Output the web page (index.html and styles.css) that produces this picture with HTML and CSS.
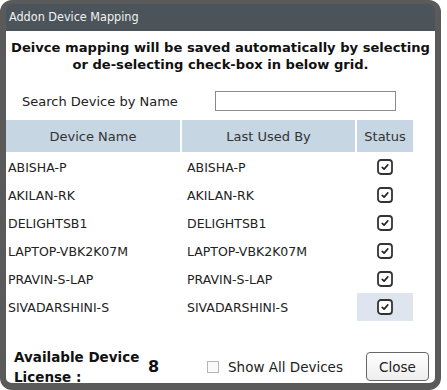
FILE: index.html
```html
<!DOCTYPE html>
<html lang="en">
<head>
    <meta charset="UTF-8">
    <title>Addon Device Mapping</title>
    <link rel="stylesheet" href="styles.css">
</head>
<body>
    <div class="dialog">
        <div class="titlebar">Addon Device Mapping</div>
        <div class="content">
            <p class="notice">Deivce mapping will be saved automatically by selecting<br>or de-selecting check-box in below grid.</p>

            <div class="search-row">
                <label for="searchInput">Search Device by Name</label>
                <input id="searchInput" type="text">
            </div>

            <table class="grid">
                <thead>
                    <tr>
                        <th class="col-name">Device Name</th>
                        <th class="col-user">Last Used By</th>
                        <th class="col-status">Status</th>
                    </tr>
                </thead>
                <tbody id="gridBody"></tbody>
            </table>

            <div class="footer">
                <div class="license-label">Available Device<br>License :</div>
                <div class="license-count">8</div>
                <label class="show-all"><span class="box"></span>Show All Devices</label>
                <button class="close-btn">Close</button>
            </div>
        </div>
    </div>

    <script>
        const devices = [
            ["ABISHA-P", "ABISHA-P"],
            ["AKILAN-RK", "AKILAN-RK"],
            ["DELIGHTSB1", "DELIGHTSB1"],
            ["LAPTOP-VBK2K07M", "LAPTOP-VBK2K07M"],
            ["PRAVIN-S-LAP", "PRAVIN-S-LAP"],
            ["SIVADARSHINI-S", "SIVADARSHINI-S"]
        ];

        const checkSvg = `
            <svg class="check" width="16" height="16" viewBox="0 0 16 16">
                <rect x="1" y="1" width="14" height="14" rx="3" fill="#fff" stroke="#333" stroke-width="1.8"/>
                <path d="M5.2 8.3 L7.1 10.1 L10.8 5.9" fill="none" stroke="#222" stroke-width="1.6" stroke-linecap="round" stroke-linejoin="round"/>
            </svg>`;

        const body = document.getElementById("gridBody");
        devices.forEach((d, index) => {
            const tr = document.createElement("tr");
            const last = index === devices.length - 1 ? " selected" : "";
            tr.innerHTML = `
                <td>${d[0]}</td>
                <td class="user">${d[1]}</td>
                <td class="status${last}">${checkSvg}</td>
            `;
            body.appendChild(tr);
        });
    </script>
</body>
</html>
```

FILE: styles.css
```css
html {
    background-color: #fff;
}

body {
    margin: 0;
    font-family: "DejaVu Sans", Verdana, sans-serif;
    color: #222;
}

.dialog {
    width: 441px;
    height: 390px;
    box-sizing: border-box;
    border-style: solid;
    border-color: #5a5a5a;
    border-width: 4px 6px 7px 6px;
    border-radius: 12px;
    background: #5a5a5a;
    display: flex;
    flex-direction: column;
    overflow: hidden;
}

.titlebar {
    height: 27px;
    line-height: 26px;
    padding-left: 3px;
    background-color: #4a545a;
    color: #f2f2f2;
    font-family: "DejaVu Sans Condensed", "DejaVu Sans", sans-serif;
    font-size: 12.5px;
    border-top-left-radius: 6px;
    border-top-right-radius: 6px;
}

.content {
    flex: 1;
    background: #fff;
    display: flex;
    flex-direction: column;
}

.notice {
    margin: 8px 0 0 0;
    font-weight: bold;
    font-size: 13.1px;
    line-height: 17px;
    text-align: center;
    color: #111;
    white-space: nowrap;
}

.search-row {
    display: flex;
    align-items: center;
    margin-top: 18px;
    height: 20px;
}

.search-row label {
    width: 209px;
    padding-left: 16px;
    box-sizing: border-box;
    font-size: 13px;
    color: #222;
}

.search-row input {
    width: 181px;
    height: 20px;
    box-sizing: border-box;
    border: 1px solid #8a8a8a;
    padding: 0 3px;
    margin: 0;
}

.grid {
    margin-top: 9px;
    border-collapse: separate;
    border-spacing: 0;
    table-layout: fixed;
    width: 407px;
    font-size: 12.5px;
}

.grid th {
    height: 32px;
    padding: 0;
    background-color: #c6d6e3;
    font-weight: normal;
    font-size: 13px;
    color: #333;
    border-right: 2px solid #fff;
    border-bottom: 1px solid #fff;
}

.grid th.col-status {
    border-right: none;
}

.col-name {
    width: 174px;
}

.col-user {
    width: 173px;
}

.grid td {
    height: 28px;
    padding: 0 0 0 2px;
    color: #222;
    white-space: nowrap;
}

.grid td.user {
    padding-left: 5px;
}

.grid td.status {
    text-align: center;
    padding: 0;
}

.grid td.selected {
    background-color: #dfe5ee;
}

.check {
    display: block;
    margin: 0 auto;
}

.footer {
    margin-top: auto;
    height: 37px;
    box-sizing: border-box;
    display: flex;
    align-items: center;
    padding: 4px 6px 0 8px;
}

.license-label {
    font-weight: bold;
    font-size: 13.5px;
    line-height: 20px;
    color: #111;
    width: 134px;
}

.license-count {
    font-weight: bold;
    font-size: 16px;
    width: 59px;
    color: #111;
}

.show-all {
    display: flex;
    align-items: center;
    font-size: 13.5px;
    color: #222;
}

.show-all .box {
    width: 10px;
    height: 10px;
    border: 1px solid #b5b5b5;
    background: #fafafa;
    margin-right: 9px;
}

.close-btn {
    margin-left: auto;
    width: 63px;
    height: 29px;
    font-family: "DejaVu Sans", Verdana, sans-serif;
    font-size: 13.5px;
    color: #222;
    border: 1px solid #666;
    border-radius: 4px;
    background: linear-gradient(#ffffff, #eeeeee);
    padding: 0;
}
```
